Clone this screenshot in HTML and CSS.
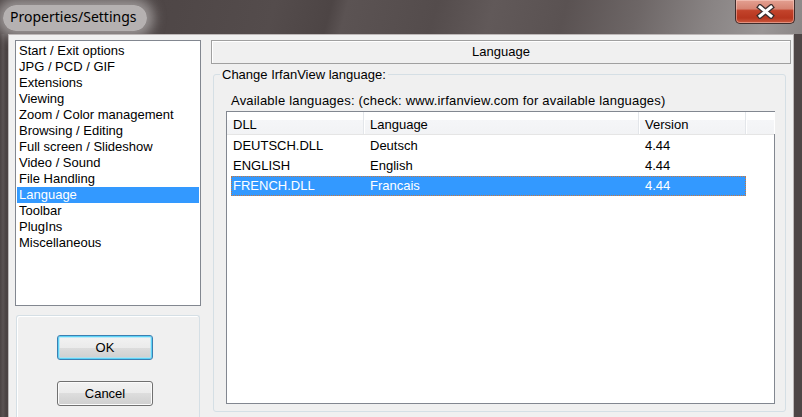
FILE: index.html
```html
<!DOCTYPE html>
<html lang="en">
<head>
  <meta charset="UTF-8" />
  <title>Properties/Settings</title>
  <link rel="stylesheet" href="styles.css">
</head>
<body>
  <div class="window">
    <div class="titlebar">
      <span class="title">Properties/Settings</span>
      <button class="close" title="Close">
        <svg width="19" height="15" viewBox="0 0 19 15">
          <path d="M4 3 L15 12 M15 3 L4 12" stroke="#3b2e2e" stroke-width="5.5" stroke-linecap="square" fill="none"/>
          <path d="M4 3 L15 12 M15 3 L4 12" stroke="#ffffff" stroke-width="3" stroke-linecap="square" fill="none"/>
        </svg>
      </button>
    </div>

    <div class="client">
      <div class="side">
        <ul class="pages">
          <li>Start / Exit options</li>
          <li>JPG / PCD / GIF</li>
          <li>Extensions</li>
          <li>Viewing</li>
          <li>Zoom / Color management</li>
          <li>Browsing / Editing</li>
          <li>Full screen / Slideshow</li>
          <li>Video / Sound</li>
          <li>File Handling</li>
          <li class="selected">Language</li>
          <li>Toolbar</li>
          <li>PlugIns</li>
          <li>Miscellaneous</li>
        </ul>
        <div class="buttons">
          <button class="btn default">OK</button>
          <button class="btn">Cancel</button>
        </div>
      </div>

      <div class="main">
        <div class="page-title">Language</div>
        <fieldset class="group">
          <legend>Change IrfanView language:</legend>
          <p class="hint">Available languages: (check: www.irfanview.com for available languages)</p>
          <div class="listview">
            <div class="lv-head">
              <div class="col c1">DLL</div>
              <div class="col c2">Language</div>
              <div class="col c3">Version</div>
              <div class="col filler"></div>
            </div>
            <div class="lv-row"><span class="c1">DEUTSCH.DLL</span><span class="c2">Deutsch</span><span class="c3">4.44</span></div>
            <div class="lv-row"><span class="c1">ENGLISH</span><span class="c2">English</span><span class="c3">4.44</span></div>
            <div class="lv-row selected"><span class="c1">FRENCH.DLL</span><span class="c2">Francais</span><span class="c3">4.44</span></div>
          </div>
        </fieldset>
      </div>
    </div>
  </div>
</body>
</html>
```

FILE: styles.css
```css
:root {
  --frame: #4e4646;
  --face: #f0f0f0;
  --list-border: #828790;
  --select: #3399ff;
  --group-line: #d5dfe5;
}
* { box-sizing: border-box; }
html, body { margin:0; padding:0; }
body {
  width:802px; height:417px; overflow:hidden;
  font-family:"Liberation Sans", Arial, sans-serif;
  font-size:13px;
  color:#000;
  background:var(--frame);
}
.window {
  width:802px; height:417px;
  display:flex; flex-direction:column;
  background:linear-gradient(90deg, #4a4242 0, #5a5252 3px, #4a4242 6px, #4e4646 100%);
}

/* caption */
.titlebar {
  height:34px; flex:none;
  display:flex; justify-content:space-between; align-items:flex-start;
  background:linear-gradient(105deg,
    #4c4444 0%, #4f4747 22%, #544c4c 34%, #4d4545 41%, #5b5353 43%,
    #544c4c 54%, #615959 61%, #5a5252 70%, #6d6666 79%, #898484 88%, #9a9696 95%, #8b8686 100%);
}
.title {
  margin:5px 0 0 3px;
  padding:3px 11px 5px 7px;
  font-family:"Noto Sans", "Open Sans", sans-serif;
  font-size:14px; line-height:18px;
  color:#000;
  background:rgba(200,196,196,0.85);
  border-radius:14px;
  box-shadow:0 0 12px 7px rgba(200,196,196,0.6);
}
.close {
  width:60px; height:24px;
  margin-right:7px;
  padding:0;
  display:flex; align-items:center; justify-content:center;
  border:1px solid #3e2c2c; border-top:none;
  border-radius:0 0 5px 5px;
  background:linear-gradient(#e3a091 0%, #d68473 38%, #c2432b 46%, #b7361f 78%, #cc5a3f 100%);
  box-shadow:inset 0 0 0 1px rgba(255,220,210,0.45);
}

/* client area */
.client {
  flex:1;
  display:flex;
  margin:0 8px;
  padding:5px 0 0 6px;
  background:var(--face);
  border:1px solid #bdb8b8; border-bottom:none;
}
.side {
  width:186px; flex:none;
  display:flex; flex-direction:column;
}
.pages {
  list-style:none; margin:0; padding:2px 1px 1px;
  height:266px;
  background:#fff;
  border:1px solid var(--list-border);
}
.pages li { line-height:16px; padding-left:2px; white-space:nowrap; }
.pages li.selected { background:var(--select); color:#fff; }

.buttons {
  flex:1;
  margin:9px 1px 0;
  padding:19px 0 0 40px;
  display:flex; flex-direction:column; align-items:flex-start; gap:21px;
  border:1px solid var(--group-line); border-bottom:none;
  border-radius:3px 3px 0 0;
  box-shadow:inset 1px 1px 0 #fff;
}
.btn {
  width:96px; height:25px; padding:0;
  font-family:"Liberation Sans", Arial, sans-serif; font-size:13px; color:#000;
  border:1px solid #707070; border-radius:3px;
  background:linear-gradient(#f2f2f2 0%, #ebebeb 50%, #dddddd 50%, #cfcfcf 100%);
  box-shadow:inset 0 0 0 1px #fbfbfb;
}
.btn.default {
  border-color:#3c7fb1;
  box-shadow:inset 0 0 0 1px #5ed3f7, inset 0 0 0 2px rgba(160,230,252,0.6);
}

.main {
  flex:1;
  margin-left:10px;
  padding-right:2px;
  display:flex; flex-direction:column;
}
.page-title {
  height:24px;
  line-height:22px;
  text-align:center;
  border:1px solid #a0a0a0;
  box-shadow:inset 1px 1px 0 #fff;
}
.group {
  margin:3px 5px 0 2px;
  padding:0 10px 7px 12px;
  border:1px solid var(--group-line);
  border-radius:3px;
  min-width:0;
}
.group legend {
  margin-left:-6px;
  padding:0 2px;
  line-height:15px;
}
.hint { margin:11px 0 3px 5px; line-height:15px; white-space:nowrap; letter-spacing:0.2px; }

.listview {
  height:293px;
  background:#fff;
  border:1px solid var(--list-border);
}
.lv-head {
  display:flex;
  height:23px;
  border-bottom:1px solid #e5e5e5;
  background:linear-gradient(#fff 0%, #fff 36%, #f5f6f8 36%, #f2f3f5 100%);
  margin-bottom:1px;
}
.lv-head .col {
  height:22px;
  padding:2px 0 0 6px;
  line-height:22px;
  border-right:1px solid #e3e6ea;
  box-shadow:1px 0 0 #fff;
}
.lv-head .c1 { width:137px; }
.lv-head .c2 { width:275px; }
.lv-head .c3 { width:107px; }
.lv-head .filler { flex:1; border-right:none; }

.lv-row {
  display:flex;
  width:515px; height:20px;
  margin-left:4px;
  line-height:20px;
}
.lv-row span { white-space:nowrap; }
.lv-row .c1 { width:133px; padding-left:2px; }
.lv-row .c2 { width:275px; padding-left:6px; }
.lv-row .c3 { flex:1; padding-left:6px; }
.lv-row.selected {
  background:var(--select); color:#fff;
  outline:1px dotted #c9783e; outline-offset:-1px;
}
```
